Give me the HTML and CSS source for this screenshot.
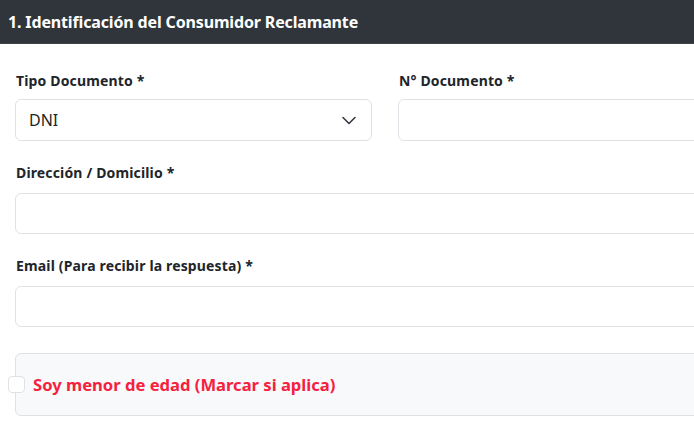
FILE: index.html
```html
<!DOCTYPE html>
<html lang="es">
<head>
<meta charset="utf-8">
<title>Libro de Reclamaciones</title>
<link rel="stylesheet" href="styles.css">
</head>
<body>
<div class="card-header">1. Identificación del Consumidor Reclamante</div>
<div class="card-body">
  <div class="row">
    <div class="field">
      <label class="label label-first">Tipo Documento *</label>
      <div class="select">
        <span>DNI</span>
        <svg class="chev" width="16" height="12" viewBox="0 0 16 12"><path d="M2 3.5l6 6 6-6" fill="none" stroke="#343a40" stroke-width="1.6" stroke-linecap="round" stroke-linejoin="round"/></svg>
      </div>
    </div>
    <div class="field">
      <label class="label label-first">N° Documento *</label>
      <div class="input input-tall"></div>
    </div>
  </div>
  <div class="field">
    <label class="label">Dirección / Domicilio *</label>
    <div class="input"></div>
  </div>
  <div class="field">
    <label class="label">Email (Para recibir la respuesta) *</label>
    <div class="input"></div>
  </div>
  <div class="check-panel">
    <span class="checkbox"></span>
    <span class="check-text">Soy menor de edad (Marcar si aplica)</span>
  </div>
</div>
</body>
</html>
```
FILE: styles.css
```css
html, body {
  margin: 0;
  padding: 0;
  overflow: hidden;
  background: #fff;
}
body {
  font-family: "Noto Sans", "Open Sans", sans-serif;
  color: #212529;
  width: 694px;
  height: 436px;
}
.card-header {
  height: 44px;
  box-sizing: border-box;
  background: #2f353b;
  border-bottom: 1px solid #3c444b;
  color: #fff;
  font-weight: 700;
  font-size: 16px;
  letter-spacing: -0.15px;
  display: flex;
  align-items: center;
  padding-left: 8px;
  white-space: nowrap;
}
.card-body {
  padding: 26px 0 0 15px;
  width: 740px;
}
.row {
  display: grid;
  grid-template-columns: 357px 357px;
  column-gap: 26px;
}
.field {
  margin-bottom: 21px;
}
.row .field {
  margin-bottom: 21px;
}
.label {
  display: block;
  font-size: 14px;
  font-weight: 700;
  line-height: 21px;
  margin: 0 0 10px 1px;
  white-space: nowrap;
  letter-spacing: 0.15px;
}
.label-first {
  margin-bottom: 8px;
}
.select, .input {
  box-sizing: border-box;
  height: 41px;
  border: 1px solid #dee2e6;
  border-radius: 6px;
  background: #fff;
}
.input-tall, .select {
  height: 42px;
}
.select {
  display: flex;
  align-items: center;
  justify-content: space-between;
  padding: 0 14px 0 13px;
  font-size: 16px;
}
.chev {
  display: block;
}
.check-panel {
  margin-top: 26px;
  height: 63px;
  box-sizing: border-box;
  border: 1px solid #dee2e6;
  border-radius: 6px;
  background: #f8f9fa;
  display: flex;
  align-items: center;
}
.checkbox {
  width: 17px;
  height: 17px;
  box-sizing: border-box;
  border: 1px solid #dee2e6;
  border-radius: 4px;
  background: #fff;
  margin-left: -8px;
  margin-right: 8px;
  flex: none;
}
.check-text {
  color: #f5213f;
  font-weight: 700;
  font-size: 16.6px;
  white-space: nowrap;
}
```
